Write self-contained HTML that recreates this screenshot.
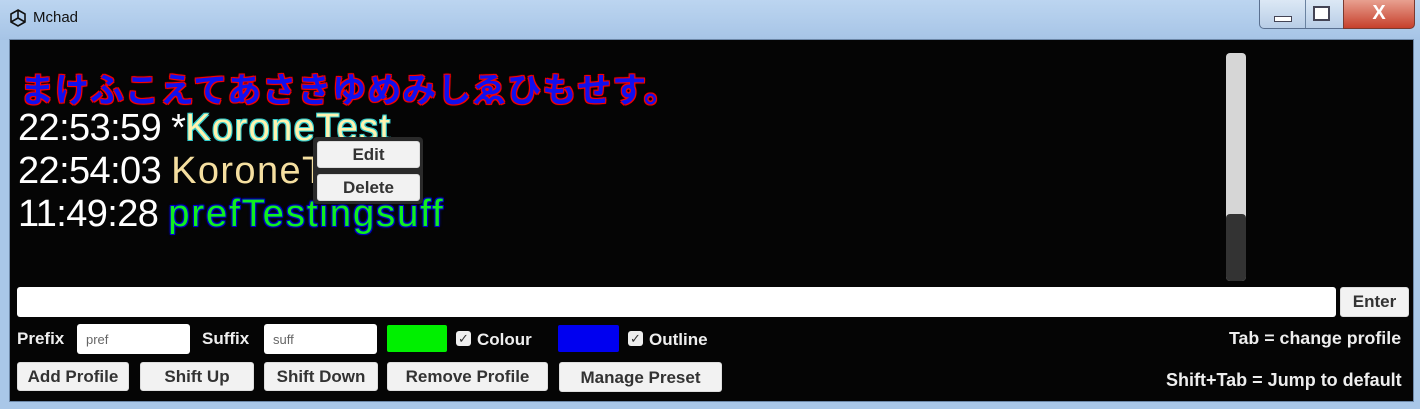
<!DOCTYPE html>
<html><head><meta charset="utf-8"><style>
body{margin:0;width:1420px;height:409px;overflow:hidden;background:#a9c7e8;font-family:"Liberation Sans",sans-serif;position:relative}
.a{position:absolute}
.tb{left:0;top:0;width:1420px;height:40px;background:linear-gradient(#bcd5f0,#a6c4e6)}
.main{left:9px;top:39px;width:1403px;height:361px;background:#050505;border:1px solid #6d88a8}
.msg{font-family:"Liberation Sans","Noto Sans CJK JP",sans-serif;font-size:38px;white-space:nowrap;letter-spacing:-0.6px}
.msg span{letter-spacing:1.4px}
.btn{background:#f2f2f2;border-radius:3px;color:#333;font-weight:bold;font-size:17px;text-align:center;box-sizing:border-box;border:1px solid #ddd}
.lbl{color:#eee;font-weight:bold;font-size:17px}
.inp{background:#fff;border-radius:3px;color:#666;font-size:13px;box-sizing:border-box;padding:8px 9px}
.chk{width:15px;height:15px;background:#eee;border-radius:3px;color:#333;font-size:13px;line-height:15px;text-align:center}
</style></head><body>
<div class="a tb"></div>
<svg class="a" style="left:9px;top:9px" width="18" height="18" viewBox="0 0 18 18"><path d="M9 1 L16 5 L16 13 L9 17 L2 13 L2 5Z M9 1 V9 M9 9 L2 13 M9 9 L16 13" fill="none" stroke="#111" stroke-width="1.6"/></svg>
<div class="a" style="left:33px;top:9px;font-size:15px;color:#111">Mchad</div>
<div class="a" style="left:1259px;top:0;width:104px;height:28px;border:1px solid #5a7090;border-top:none;border-radius:0 0 0 5px;background:linear-gradient(#dce8f5,#b8cde6)"></div>
<div class="a" style="left:1305px;top:0;width:1px;height:28px;background:#6a82a0"></div>
<div class="a" style="left:1274px;top:16px;width:16px;height:4px;background:#fff;border:1px solid #445"></div>
<div class="a" style="left:1313px;top:6px;width:13px;height:11px;border:2px solid #445;background:#fff"></div>
<div class="a" style="left:1343px;top:0;width:70px;height:28px;background:linear-gradient(#e8a090,#c6402c);border:1px solid #7a3a30;border-top:none;border-radius:0 0 5px 0;color:#fff;font-size:20px;font-weight:bold;text-align:center;line-height:26px">X</div>
<div class="a main"></div>
<div class="a msg" style="left:20px;top:63px;font-size:34px;letter-spacing:1.0px;color:#1010ee;font-weight:bold;text-shadow:0 0 2px #f00,0 0 2px #f00,1px 1px 0 #e00,-1px -1px 0 #e00,1px -1px 0 #e00,-1px 1px 0 #e00">まけふこえてあさきゆめみしゑひもせす。</div>
<div class="a msg" style="left:18px;top:107px;color:#fff">22:53:59 *<span style="color:#fff3b0;text-shadow:1px 1px 0 #3cc,-1px -1px 0 #3cc,1px -1px 0 #3cc,-1px 1px 0 #3cc">KoroneTest</span></div>
<div class="a msg" style="left:18px;top:150px;color:#fff">22:54:03 <span style="color:#f5dfa0">KoroneT</span></div>
<div class="a msg" style="left:18px;top:193px;color:#fff">11:49:28 <span style="color:#10ee20;letter-spacing:2px;text-shadow:1px 1px 0 #00c,-1px -1px 0 #00c,1px -1px 0 #00c,-1px 1px 0 #00c,0 0 3px #00f">prefTestingsuff</span></div>
<div class="a" style="left:313px;top:137px;width:110px;height:67px;background:#2a2a2a;border-radius:4px"></div>
<div class="a btn" style="left:317px;top:141px;width:103px;height:27px;line-height:25px">Edit</div>
<div class="a btn" style="left:317px;top:174px;width:103px;height:27px;line-height:25px">Delete</div>
<div class="a" style="left:1226px;top:53px;width:20px;height:228px;background:#d6d6d6;border-radius:4px"></div>
<div class="a" style="left:1226px;top:214px;width:20px;height:67px;background:#333;border-radius:4px"></div>
<div class="a" style="left:17px;top:287px;width:1319px;height:30px;background:#fff;border-radius:3px"></div>
<div class="a btn" style="left:1340px;top:287px;width:69px;height:30px;line-height:28px">Enter</div>
<div class="a lbl" style="left:17px;top:329px">Prefix</div>
<div class="a inp" style="left:77px;top:324px;width:113px;height:30px">pref</div>
<div class="a lbl" style="left:202px;top:329px">Suffix</div>
<div class="a inp" style="left:264px;top:324px;width:113px;height:30px">suff</div>
<div class="a" style="left:387px;top:325px;width:60px;height:27px;background:#00f000;border-radius:2px"></div>
<div class="a chk" style="left:456px;top:331px">✓</div>
<div class="a lbl" style="left:477px;top:330px">Colour</div>
<div class="a" style="left:558px;top:325px;width:61px;height:27px;background:#0000f0;border-radius:2px"></div>
<div class="a chk" style="left:628px;top:331px">✓</div>
<div class="a lbl" style="left:649px;top:330px">Outline</div>
<div class="a lbl" style="left:1229px;top:328px;font-size:17.8px">Tab = change profile</div>
<div class="a lbl" style="left:1166px;top:370px;font-size:18px">Shift+Tab = Jump to default</div>
<div class="a btn" style="left:17px;top:362px;width:112px;height:29px;line-height:27px">Add Profile</div>
<div class="a btn" style="left:140px;top:362px;width:114px;height:29px;line-height:27px">Shift Up</div>
<div class="a btn" style="left:264px;top:362px;width:114px;height:29px;line-height:27px">Shift Down</div>
<div class="a btn" style="left:387px;top:362px;width:161px;height:29px;line-height:27px">Remove Profile</div>
<div class="a btn" style="left:559px;top:362px;width:163px;height:30px;line-height:30px">Manage Preset</div>
</body></html>
